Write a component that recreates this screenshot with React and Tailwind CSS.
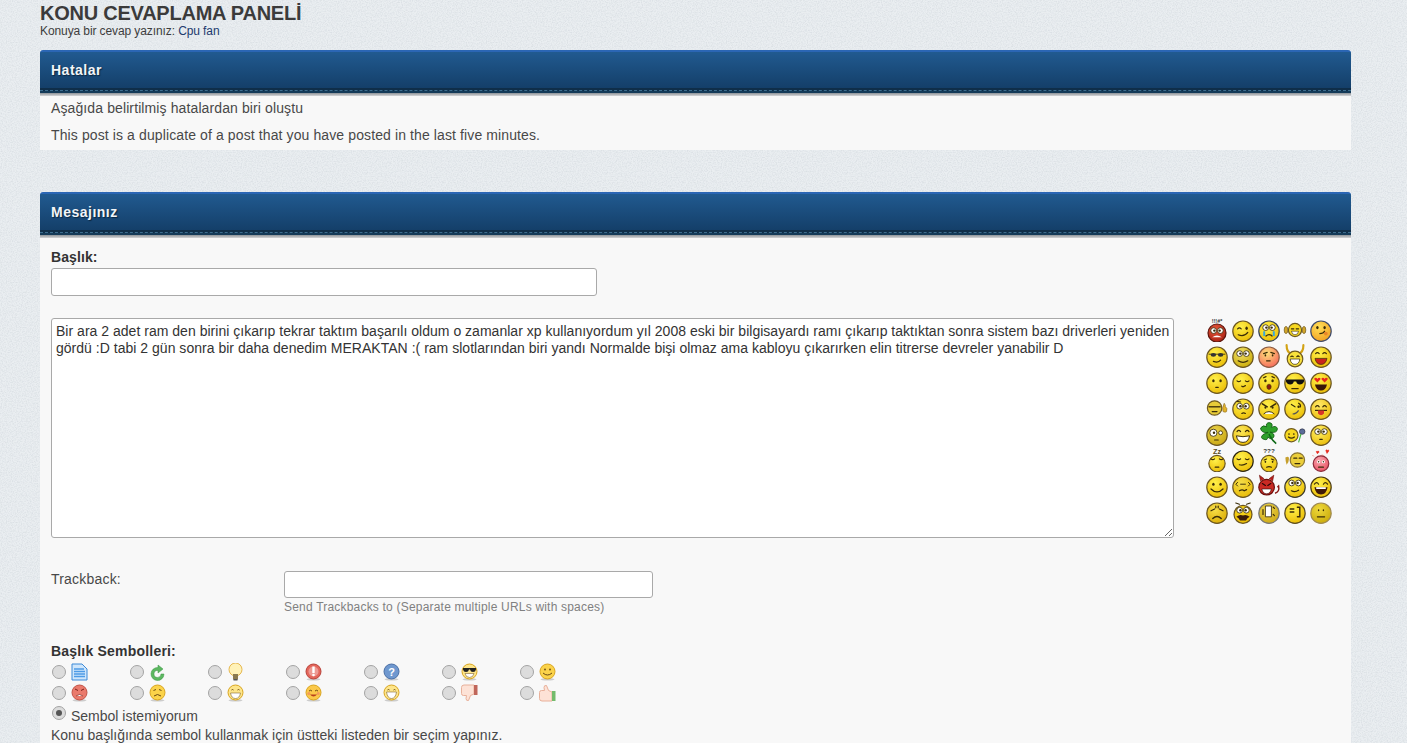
import { useId } from 'react'

const FONT = "font-['Liberation_Sans',Arial,sans-serif]"

function Face({ cx = 10, cy = 11, r = 8.5, c1 = '#fff04a', c2 = '#e9b800', edge = '#6a5520', children }) {
  const id = useId()
  return (
    <svg width="24" height="24" viewBox="0 0 20 20" className="shrink-0">
      <defs>
        <radialGradient id={id} cx="0.4" cy="0.3" r="0.8">
          <stop offset="0" stopColor={c1} />
          <stop offset="1" stopColor={c2} />
        </radialGradient>
      </defs>
      <circle cx={cx} cy={cy} r={r} fill={`url(#${id})`} stroke={edge} strokeWidth="1" />
      {children}
    </svg>
  )
}

const k = '#3a2c08'
const Eyes = ({ y = 9, dx = 3, r = 1 }) => (
  <>
    <ellipse cx={10 - dx} cy={y} rx={r} ry={r * 1.3} fill={k} />
    <ellipse cx={10 + dx} cy={y} rx={r} ry={r * 1.3} fill={k} />
  </>
)
const BigEyes = ({ y = 8.5 }) => (
  <>
    <circle cx="7.2" cy={y} r="2.4" fill="#fff" stroke={k} strokeWidth="0.7" />
    <circle cx="12.8" cy={y} r="2.4" fill="#fff" stroke={k} strokeWidth="0.7" />
    <circle cx="7.8" cy={y} r="1" fill={k} />
    <circle cx="12.2" cy={y} r="1" fill={k} />
  </>
)
const Line = ({ d, w = 1, c = k }) => <path d={d} fill="none" stroke={c} strokeWidth={w} strokeLinecap="round" />
const Closed = () => <Line d="M5 9q1.5 1.5 3 0M12 9q1.5 1.5 3 0" />
const Laugh = ({ fill = '#c9251c' }) => <path d="M5 12h10q-1 5-5 5t-5-5z" fill={fill} stroke={k} strokeWidth="0.6" />
const Grin = () => <path d="M4.5 11.5q5.500 1.500 11 0q-1 5.500-5.500 5.500t-5.500-5.500z" fill="#fff" stroke={k} strokeWidth="0.8" />
const Tiny = ({ t, y = 4, s = 4.5, c = '#333' }) => (
  <text x="10" y={y} textAnchor="middle" fontSize={s} fontWeight="700" fontFamily="Liberation Sans" fill={c}>{t}</text>
)
const Raw = ({ children }) => (
  <svg width="24" height="24" viewBox="0 0 20 20" className="shrink-0">{children}</svg>
)

const SMILEYS = [
  <Face c1="#e8573a" c2="#a31d10" edge="#5c140c" cy={12.5} r={7.5}><Tiny t="!!!#*" /><BigEyes y={10.5} /><path d="M6 16q4-3 8 0z" fill="#fff" /></Face>,
  <Face><Line d="M5.5 9q1.5-1.5 3 0" /><ellipse cx="13" cy="8.5" rx="1" ry="1.5" fill={k} /><Line d="M6 14q5 2 8-2" /></Face>,
  <Face edge="#33405a"><BigEyes y={8} /><path d="M6 11v4M14 11v4" stroke="#35a7e0" strokeWidth="1.6" /><Line d="M7.5 15q2.5-2.5 5 0" /></Face>,
  <Raw><circle cx="10" cy="10" r="5.500" fill="#f7d820" stroke="#6f5a20" /><Line d="M7 9h2M11 9h2" /><path d="M7 11h6q-.5 3-3 3t-3-3z" fill="#fff" stroke={k} strokeWidth=".5" /><ellipse cx="2.500" cy="10" rx="1.500" ry="3" fill="#d3a52a" stroke="#6f5a20" strokeWidth=".6" /><ellipse cx="17.500" cy="10" rx="1.500" ry="3" fill="#d3a52a" stroke="#6f5a20" strokeWidth=".6" /></Raw>,
  <Face c1="#ffe05a" c2="#f09a1c" edge="#3d4a6a"><Eyes y={8} /><Line d="M9 13q3 0 4-2" /><circle cx="14" cy="13" r="1.600" fill="#e9862a" /></Face>,

  <Face><path d="M3 8.500h14" stroke={k} strokeWidth=".7" /><ellipse cx="7" cy="9" rx="2.300" ry="1.600" fill="#333" /><ellipse cx="13" cy="9" rx="2.300" ry="1.600" fill="#333" /><Line d="M7 14.500q4 1.500 6-1" /></Face>,
  <Face c1="#efe06a" c2="#c9a800"><BigEyes y={8} /><Line d="M6 14q4 2.500 8 0" /></Face>,
  <Face c1="#ffe07a" c2="#f4605a" edge="#8a5a40"><Line d="M5.500 8l3-1M14.500 8l-3-1" /><Eyes y={9.500} dx={3} r={.7} /><Line d="M8 14h3" /></Face>,
  <Raw><Line d="M3 1q0 6 4 7M17 1q0 6-4 7" w={1.800} c="#d2a214" /><circle cx="10" cy="12.500" r="6.500" fill="#f9e23c" stroke="#6f5a20" /><Line d="M6.500 10.500q1-1 2 0M11.500 10.500q1-1 2 0" /><path d="M6 12.500h8q-.5 4.500-4 4.500t-4-4.500z" fill="#fff" stroke={k} strokeWidth=".6" /></Raw>,
  <Face><Line d="M5.500 8q1.500-1.500 3 0M11.500 8q1.500-1.500 3 0" /><Laugh /></Face>,

  <Face><Eyes y={9} /><Line d="M9 14.500h2" /></Face>,
  <Face><Closed /><Line d="M9 13.500q1 .8 2 0l1-.5" /></Face>,
  <Face><Line d="M5.500 6.500l2-1M14.500 6.500l-2-1" /><Eyes y={9} /><ellipse cx="10" cy="14" rx="1.800" ry="2.200" fill="#8a1c10" stroke={k} strokeWidth=".5" /></Face>,
  <Face><path d="M2.500 8h15v1.500q-1 2.500-3.500 2.500t-3-2.500h-2q-.5 2.500-3 2.500t-3.500-2.500z" fill="#111" /><path d="M7 15.500h6" stroke={k} strokeWidth="1" /></Face>,
  <Face><path d="M7 10.500L4.500 8q-.6-1.600 1-1.600q1 0 1.500 1q.5-1 1.500-1q1.600 0 1 1.600zM13 10.500L10.500 8q-.6-1.600 1-1.600q1 0 1.500 1q.5-1 1.500-1q1.600 0 1 1.600z" fill="#e8281c" /><path d="M5 12h10q-1 5-5 5t-5-5z" fill="#3a1608" /></Face>,

  <Raw><circle cx="8" cy="10" r="6" fill="#e8cc38" stroke="#6f5a20" /><path d="M3 9h10" stroke={k} strokeWidth="1.100" /><Line d="M6 13h4" /><path d="M16 6q1.500 2 1 3q2 1 1 4q-1 1-3 0q-1-3 1-7z" fill="#e3b32c" stroke="#8a6a20" strokeWidth=".5" /></Raw>,
  <Face><BigEyes y={8.500} /><Line d="M5 4.500l3 .5" /><Line d="M9 14.500q1.500-1 3 0" /></Face>,
  <Face><Line d="M4.500 6.500l4 2.500M15.500 6.500l-4 2.500" w={1.300} /><Eyes y={9.500} r={.8} /><path d="M5.500 15q4.500-4 9 0" fill="#fff" stroke={k} strokeWidth=".8" /></Face>,
  <Face><Line d="M7 7l3 2M13 6q2 1 1.500 3" /><circle cx="13" cy="9" r="1" fill={k} /><path d="M8 15q3 0 5-3" stroke="#555" fill="none" /></Face>,
  <Face c1="#ffe96a"><Line d="M5.500 9q1.500-2 3 0M11.500 9q1.500-2 3 0" /><path d="M5 12h10" stroke={k} /><path d="M7.500 12h5v2.500q-2.500 3-5 0z" fill="#d8342a" /></Face>,

  <Face c1="#ebd34a" c2="#c6a410"><circle cx="7" cy="9" r="3" fill="#fff" stroke={k} strokeWidth=".7" /><circle cx="7.500" cy="9" r="1" fill={k} /><circle cx="13" cy="9" r="1.600" fill="#fff" stroke={k} strokeWidth=".7" /><Line d="M8 15h3" /></Face>,
  <Face c1="#fbe75a"><Line d="M5 8q1.500-2 3 0M12 8q1.500-2 3 0" /><Grin /></Face>,
  <Raw><path d="M9 9Q3 9 3 5q2-3 5-1q-1-3 2-3.500q4 .5 2 4q4-2 5 1q0 4-6 3q4 1 3 4q-2 3-5 0q0 3-3 2q-4-1-1-4q2-1 4-2z" fill="#2ea02c" stroke="#0f5a12" strokeWidth=".7" /><path d="M10 10q2 5 6 8" stroke="#0f6a18" strokeWidth="1.300" fill="none" /></Raw>,
  <Raw><circle cx="7" cy="11" r="5.500" fill="#f7d820" stroke="#6f5a20" /><circle cx="5" cy="10" r=".7" fill={k} /><circle cx="9" cy="10" r=".7" fill={k} /><Line d="M4.500 12.500q2.500 2 5 0" /><circle cx="16" cy="8" r="2.300" fill="#5c6e9a" stroke="#223" strokeWidth=".5" /><path d="M13 17l2-7" stroke="#3cb43c" strokeWidth=".9" /></Raw>,
  <Face c1="#fff06a"><BigEyes y={8} /><Line d="M9 14.500h2" /></Face>,

  <Face cy={13} r={6.800}><Tiny t="Zz" y={5} s={6} c="#5a4a20" /><Closed /><Line d="M8.500 16h3" /></Face>,
  <Face edge="#2b2510"><Closed /><Line d="M7 14q3 1 6-1" /></Face>,
  <Face cy={13} r={6.800}><Tiny t="???" y={4.500} s={5.200} /><Line d="M6 10l2-.8M14 10l-2-.8" /><Eyes y={11.500} r={.7} /><Line d="M8 16q2-1 4 0" /></Face>,
  <Raw><circle cx="12" cy="10" r="6" fill="#eccf3a" stroke="#8a7430" /><Line d="M9 8.500h2.500M13.500 8.500h2.500" /><Line d="M10 13h4" /><path d="M2 8q3-2 3 1q0 3-2 5q-1-3-1-6z" fill="#c69f2c" /></Raw>,
  <Face c1="#f9a8b0" c2="#e84a5c" edge="#8a2c3a" cy={13} r={6.500}><path d="M6 3q1-1 1.300 0q1-1 1 .5l-1.300 1.300zM14 2q1-1 1.500 0q1-1 1 .5L15 4.500zM3 6l1 1M11 5.500l.8 1" stroke="#e8281c" fill="#e8281c" strokeWidth=".5" /><circle cx="8" cy="11.500" r="1.300" fill="#fff" /><circle cx="12" cy="11.500" r="1.300" fill="#fff" /><circle cx="8" cy="11.500" r=".6" fill={k} /><circle cx="12" cy="11.500" r=".6" fill={k} /><Line d="M8 16h4" /></Face>,

  <Face><Eyes y={8.500} /><Line d="M5 12.500q5 5 10 0" /></Face>,
  <Face c1="#f4de4a"><Line d="M5.500 7l-1.500 1.500l1.500 1.500M14.500 7l1.500 1.500l-1.500 1.500M8 8.500h4" w={.8} /><Line d="M7 14q2.500-1.500 4 0l2-1" /></Face>,
  <Raw><path d="M3 6L2 1l4 3M13 6l1-5-4 3" fill="#b8201c" stroke="#6a0f0c" strokeWidth=".5" /><circle cx="8" cy="11" r="6.500" fill="#c92a24" stroke="#6a0f0c" /><Line d="M4.500 8l2.500 1.500M11.500 8L9 9.500" c="#2c0806" /><path d="M4 12.500h8q-1 4-4 4t-4-4z" fill="#fff" stroke="#2c0806" strokeWidth=".5" /><path d="M15 16q4-1 3-6l-1 1" stroke="#8a1a16" strokeWidth="1.200" fill="none" /></Raw>,
  <Face edge="#3d3a2a"><BigEyes y={7.500} /><Line d="M7 14q3 1.500 6-.5" /></Face>,
  <Face edge="#4a3a10"><Line d="M4.500 8.500q2-2.500 3.500 0M12 8.500q1.500-2.500 3.500 0" /><path d="M4.500 11h11q-1 6-5.500 6t-5.500-6z" fill="#401a08" /><path d="M6 11h8v1.500H6z" fill="#fff" /></Face>,

  <Face c1="#f9e04a" c2="#d8a800"><Line d="M5 9l3-1.500M15 9l-3-1.500M9 5v1.500M11 5v1.500" /><Line d="M6.500 15.500q3.500-3.500 7 0" w={1.200} /></Face>,
  <Face cy={12} r={7.500} c1="#f7d820"><Line d="M4 2.500l3 1M16 2.500l-3 1" /><BigEyes y={8.500} /><path d="M4.500 14q3-2.500 5.500-1q2.500-1.500 5.500 1q-2 1-3 3h-5q-1-2-3-3z" fill="#3a1c0a" /></Face>,
  <Face c1="#efd54c" c2="#c9a410" edge="#777"><path d="M7 5h5v9H7z" fill="#fff" stroke={k} strokeWidth=".7" /><Line d="M13.500 6l1 1M13.500 12l1 1M5 8v4" /></Face>,
  <Face edge="#5a4a20"><Line d="M6 7.500h3M6 10h3" w={1.200} /><Line d="M12 6h2v8h-2" w={1.200} /></Face>,
  <Face c1="#eed83c" c2="#c8a808" edge="#a08a50"><Eyes y={8.500} dx={2} r={.6} /><Line d="M7 14h6" /></Face>,
]

const TopicIcon = ({ children }) => (
  <svg width="17" height="18" viewBox="0 0 17 18" className="shrink-0">{children}</svg>
)
const MiniFace = ({ fill = '#fbd34a', stroke = '#d9a520', children }) => (
  <TopicIcon>
    <ellipse cx="8.500" cy="16.300" rx="7" ry="1.200" fill="#ccc" />
    <circle cx="8.500" cy="8.500" r="7.500" fill={fill} stroke={stroke} />
    {children}
  </TopicIcon>
)
const b = '#6b4a12'

const TOPIC_ICONS = [
  <TopicIcon><path d="M1 1h10l5 5v11H1z" fill="#cfe6fb" stroke="#3c8ad8" /><path d="M3 6h10M3 8.500h11M3 11h11M3 13.500h11" stroke="#4d9be6" strokeWidth="1.300" /></TopicIcon>,
  <TopicIcon><path d="M15 10a6.500 6.500 0 1 1-6-6.500V1l5 4-5 4V6.500A3.500 3.500 0 1 0 12 10z" fill="#5cb860" stroke="#3d9445" strokeWidth=".5" transform="translate(0 1)" /></TopicIcon>,
  <TopicIcon><circle cx="8.500" cy="6.500" r="6.500" fill="#fff2b8" stroke="#e6b850" /><rect x="6" y="11" width="5" height="5.500" fill="#8a7a50" /><rect x="6.500" y="16" width="4" height="1.500" fill="#555" /></TopicIcon>,
  <MiniFace fill="#e3655a" stroke="#b9423a"><circle cx="8.500" cy="8.500" r="5" fill="#fff" opacity=".35" /><rect x="7.300" y="3.500" width="2.400" height="6.500" fill="#fff" /><circle cx="8.500" cy="12" r="1.300" fill="#fff" /></MiniFace>,
  <MiniFace fill="#6f98cf" stroke="#4a6fa5"><text x="8.500" y="12.500" textAnchor="middle" fontSize="11" fontWeight="700" fontFamily="Liberation Sans" fill="#fff">?</text></MiniFace>,
  <MiniFace fill="#fde58a"><path d="M2 5h13v1.500q-.5 2.500-3 2.500t-3-2.500h-1q-.5 2.500-3 2.500t-3-2.500z" fill="#222" /><path d="M4 10.500h9q-1 4-4.500 4t-4.500-4z" fill="#fff" stroke={b} strokeWidth=".5" /></MiniFace>,
  <MiniFace><circle cx="6" cy="6.500" r=".9" fill={b} /><circle cx="11" cy="6.500" r=".9" fill={b} /><path d="M4 10q4.500 4 9 0" fill="none" stroke={b} /></MiniFace>,
  <MiniFace fill="#ea7a6c" stroke="#c25448"><path d="M4 5l3 1.500M13 5l-3 1.500" stroke="#7a2018" /><path d="M5 12q3.500-3 7 0" fill="#fff" stroke="#7a2018" strokeWidth=".7" /></MiniFace>,
  <MiniFace><path d="M4.500 6.500l2.500-1M12.500 6.500l-2.500-1" stroke={b} /><path d="M5 12q3.500-3 7 0" fill="none" stroke={b} /></MiniFace>,
  <MiniFace fill="#fde58a"><path d="M4.500 6q1-1 2 0M10.500 6q1-1 2 0" fill="none" stroke={b} /><path d="M3.500 9h10q-1 5.500-5 5.500t-5-5.500z" fill="#fff" stroke={b} strokeWidth=".5" /></MiniFace>,
  <MiniFace fill="#fbc94a"><path d="M4 7q1.500-1.500 3 0M10 7q1.500-1.500 3 0" fill="none" stroke={b} /><circle cx="3.800" cy="9.500" r="1.500" fill="#f39a5a" /><circle cx="13.200" cy="9.500" r="1.500" fill="#f39a5a" /><path d="M5 10.500q3.500 4 7 0z" fill="#b8401c" /></MiniFace>,
  <MiniFace fill="#fde58a"><path d="M4.500 6q1-1 2 0M10.500 6q1-1 2 0" fill="none" stroke={b} /><path d="M3.500 8h10q-1 6.500-5 6.500t-5-6.500z" fill="#fff" stroke={b} strokeWidth=".5" /></MiniFace>,
  <TopicIcon><path d="M.5 3.500q0-2.500 2.500-2.500h10v9l-3.500 1.500-2 5q-2.500.5-2.500-2l.5-3H2.500q-2 0-2-2z" fill="#fde2d6" stroke="#e8b09a" /><rect x="13" y="1" width="3.500" height="10" fill="#c0665a" /></TopicIcon>,
  <TopicIcon><path d="M.5 14.500q0 2.500 2.500 2.500h10V8L9.500 6.500l-2-5q-2.500-.5-2.500 2l.5 3H2.500q-2 0-2 2z" fill="#fde2d6" stroke="#e8b09a" /><rect x="13" y="7" width="3.500" height="10" fill="#74bb6c" /></TopicIcon>,
]

function PanelHeader({ title }) {
  return (
    <div className="h-[46px] rounded-t-[3px] overflow-hidden flex flex-col">
      <div className="h-[38px] border-t-2 border-[#2b66b4] bg-gradient-to-b from-[#215a90] to-[#143f69] flex items-center pl-[11px] pt-[1px]">
        <span className="text-[14px] font-bold text-[#f2f5f8] [text-shadow:1px_1px_1px_#0b2740] tracking-[0.5px]">{title}</span>
      </div>
      <div className="h-[3px] bg-[#0f2e49] border-b border-dashed border-[#3d6d8e]" />
      <div className="h-[2px] bg-[#143a58]" />
      <div className="h-[3px] bg-gradient-to-b from-[#8d9297] to-[#d5d6d8]" />
    </div>
  )
}

function Radio({ checked }) {
  return (
    <span className="w-[14px] h-[14px] shrink-0 rounded-full border border-[#a4a4a4] bg-[#dcdcdc] flex items-center justify-center">
      {checked && <span className="w-[6px] h-[6px] rounded-full bg-[#555]" />}
    </span>
  )
}

export default function App() {
  return (
    <div className={`${FONT} h-[743px] overflow-hidden bg-[#eaeef1] bg-[url('data:image/svg+xml,%3Csvg%20xmlns=%22http://www.w3.org/2000/svg%22%20width=%22240%22%20height=%22240%22%3E%3Cfilter%20id=%22n%22%3E%3CfeTurbulence%20type=%22fractalNoise%22%20baseFrequency=%22.8%22%20numOctaves=%222%22/%3E%3CfeColorMatrix%20values=%220%200%200%200%20.45%200%200%200%200%20.5%200%200%200%200%20.55%20.6%200%200%200%20-.22%22/%3E%3C/filter%3E%3Crect%20width=%22240%22%20height=%22240%22%20filter=%22url(%23n)%22/%3E%3C/svg%3E')] px-[40px] pt-[3px] w-[1407px] text-[#484848]`}>
      <div className="w-[1311px]">
        <h1 className="text-[20px] leading-[20px] font-bold text-[#3b3b3b] tracking-[-0.24px]">KONU CEVAPLAMA PANELİ</h1>
        <p className="text-[12px] leading-[14px] mt-[1px] text-[#3d3d3d] tracking-[-0.1px]">
          Konuya bir cevap yazınız: <span className="text-[#1d3a6e]">Cpu fan</span>
        </p>

        <section className="mt-[12px] bg-[#f8f8f8]">
          <PanelHeader title="Hatalar" />
          <div className="px-[11px] pt-[3px] pb-[6px] text-[14px] leading-[18px] tracking-[0.11px]">
            <p>Aşağıda belirtilmiş hatalardan biri oluştu</p>
            <p className="mt-[9px]">This post is a duplicate of a post that you have posted in the last five minutes.</p>
          </div>
        </section>

        <section className="mt-[42px] bg-[#f8f8f8] h-[600px]">
          <PanelHeader title="Mesajınız" />
          <div className="px-[11px] pt-[10px] text-[14px]">
            <label className="block font-bold text-[14px] leading-[18px] text-[#333] tracking-[0.1px]">Başlık:</label>
            <input className="block mt-[2px] w-[546px] h-[28px] bg-white border border-[#a9a9a9] rounded-[3px] outline-none" />

            <div className="flex mt-[22px]">
              <textarea
                readOnly
                className="w-[1123px] h-[220px] bg-white border border-[#a9a9a9] rounded-[3px] pl-[4px] pr-0 py-[4px] text-[14px] leading-[17px] tracking-[0.02px] text-[#333] outline-none shrink-0"
                defaultValue="Bir ara 2 adet ram den birini çıkarıp tekrar taktım başarılı oldum o zamanlar xp kullanıyordum yıl 2008 eski bir bilgisayardı ramı çıkarıp taktıktan sonra sistem bazı driverleri yeniden gördü :D tabi 2 gün sonra bir daha denedim MERAKTAN :( ram slotlarından biri yandı Normalde bişi olmaz ama kabloyu çıkarırken elin titrerse devreler yanabilir D"
              />
              <div className="ml-[30px] -mt-[1px] self-start grid grid-cols-[repeat(5,26px)] auto-rows-[26px] place-items-center">
                {SMILEYS.map((s, i) => (
                  <div key={i} className="w-[26px] h-[26px] flex items-center justify-center">{s}</div>
                ))}
              </div>
            </div>

            <div className="flex mt-[33px]">
              <div className="w-[233px] leading-[16px] tracking-[0.2px]">Trackback:</div>
              <div>
                <input className="block w-[369px] h-[27px] bg-white border border-[#a9a9a9] rounded-[3px] outline-none" />
                <p className="text-[12px] leading-[14px] mt-[2px] text-[#808080] tracking-[0.2px]">Send Trackbacks to (Separate multiple URLs with spaces)</p>
              </div>
            </div>

            <h3 className="font-bold text-[14px] leading-[18px] mt-[28px] text-[#333] tracking-[0.2px]">Başlık Sembolleri:</h3>
            <div className="grid grid-cols-[repeat(7,78px)] auto-rows-[21px] w-[546px] mt-[1px]">
              {TOPIC_ICONS.map((icon, i) => (
                <div key={i} className="flex items-center gap-[5px] pl-[1px]">
                  <Radio />
                  {icon}
                </div>
              ))}
            </div>
            <div className="flex items-center gap-[5px] pl-[1px] h-[22px] leading-[22px] mt-[1px]">
              <span className="-mt-[4px]"><Radio checked /></span>
              <span className="pt-[1px]">Sembol istemiyorum</span>
            </div>
            <p className="leading-[16px] mt-[1px]">Konu başlığında sembol kullanmak için üstteki listeden bir seçim yapınız.</p>
          </div>
        </section>
      </div>
    </div>
  )
}
